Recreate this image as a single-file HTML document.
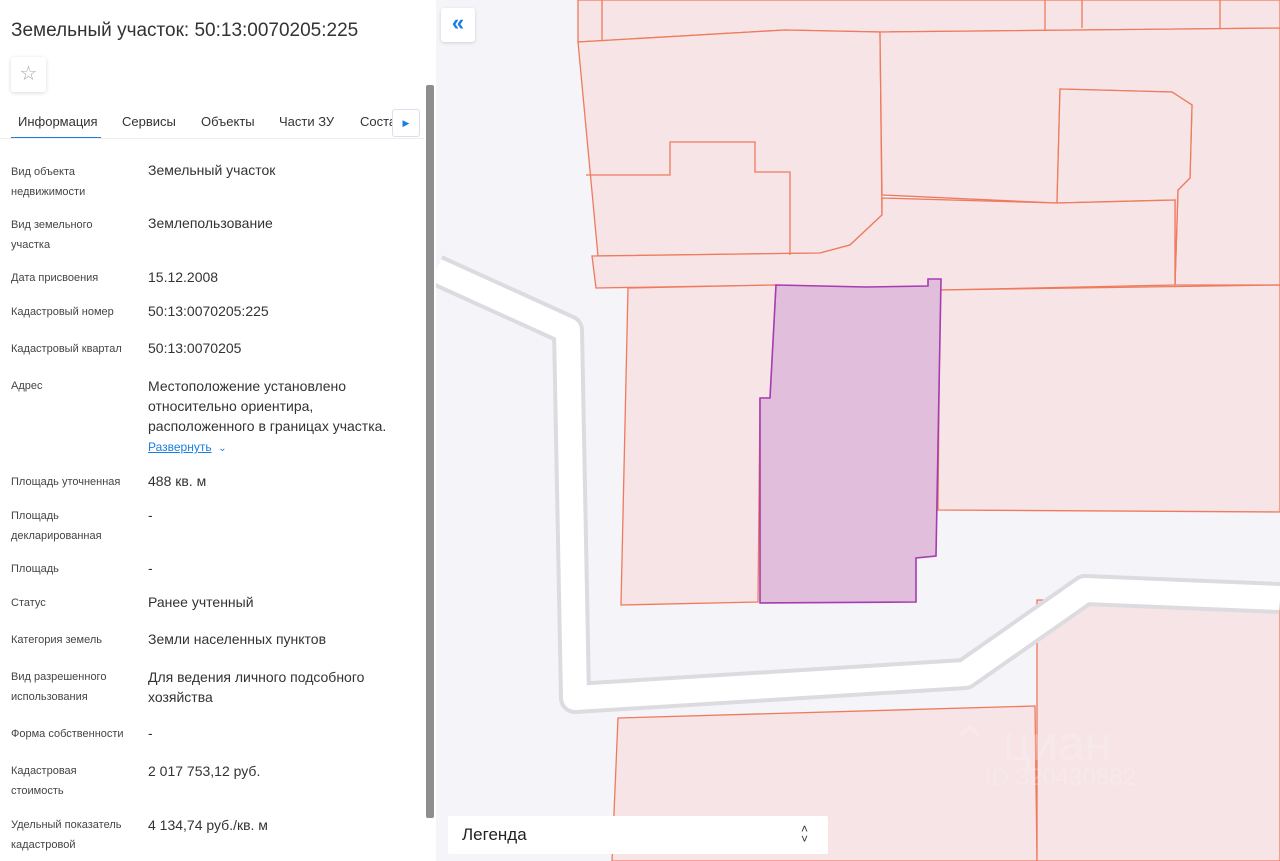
<!DOCTYPE html>
<html><head><meta charset="utf-8"><style>
*{margin:0;padding:0;box-sizing:border-box}
body{width:1280px;height:861px;overflow:hidden;background:#f4f4f9;font-family:"Liberation Sans","DejaVu Sans",sans-serif;position:relative}
#map{position:absolute;left:0;top:0}
#panel{position:absolute;left:0;top:0;width:436px;height:861px;background:#fff}
h1{position:absolute;left:11px;top:20px;font-size:19px;font-weight:normal;color:#333}
.star{position:absolute;left:11px;top:57px;width:35px;height:35px;border-radius:3px;box-shadow:0 1px 4px rgba(0,0,0,.15);color:#aaa;font-size:20px;text-align:center;line-height:35px}
.tabs{position:absolute;left:0;top:113px;width:424px;height:26px;border-bottom:1px solid #eee;font-size:13px;color:#333;white-space:nowrap;overflow:hidden}
.tabs span{position:absolute;top:1px}
.ul{position:absolute;left:11px;top:24px;width:90px;height:2px;background:#1a7fe0}
.arr{position:absolute;left:392px;top:109px;width:28px;height:28px;background:#fff;border:1px solid #dde;border-radius:3px;color:#1a7fe0;font-size:9px;text-align:center;line-height:26px}
.row{position:absolute;left:11px;width:410px}
.l{position:absolute;left:0;top:0;width:115px;font-size:11px;line-height:20px;color:#444}
.v{position:absolute;left:137px;top:-6px;width:275px;font-size:14px;line-height:20px;color:#333}
.sb{position:absolute;left:426px;top:85px;width:8px;height:733px;background:#8e8e8e;border-radius:2px}
.btn{position:absolute;left:441px;top:8px;width:34px;height:34px;background:#fff;border-radius:3px;box-shadow:0 1px 3px rgba(0,0,0,.15);color:#1a7fe0;font-size:22px;text-align:center;line-height:30px;font-weight:bold}
.leg{position:absolute;left:448px;top:816px;width:380px;height:38px;background:#fff;border-radius:2px;font-size:17px;color:#222;padding:9px 0 0 14px}
.leg b{position:absolute;right:20px;top:8px;font-weight:normal;font-size:12px;line-height:10px;color:#333}
</style></head><body>
<svg id="map" width="1280" height="861" viewBox="0 0 1280 861">
<rect x="436" y="0" width="844" height="861" fill="#f4f4f9"/>
<g fill="#f6e4e6" stroke="#ef7a5c" stroke-width="1.3">
<polygon points="578,0 1280,0 1280,28 880,32 785,30 578,42"/>
<polygon points="578,42 785,30 880,32 882,215 850,245 820,253 598,256"/>
<polygon points="880,32 1280,28 1280,285 1175,285 1178,190 1190,178 1192,105 1172,92 1060,89 1057,203 882,195"/>
<polygon points="1060,89 1172,92 1192,105 1190,178 1178,190 1175,285 1175,200 1057,203"/>
<polygon points="592,256 820,253 850,245 882,215 882,198 1057,203 1175,200 1175,285 940,290 776,285 596,288"/>
<polygon points="628,288 776,285 770,398 760,398 758,602 621,605"/>
<polygon points="940,290 1280,285 1280,512 938,510"/>
<polygon points="618,718 1035,706 1037,861 612,861"/>
<polygon points="1037,600 1280,603 1280,861 1037,861"/>
</g>
<g fill="none" stroke="#ef7a5c" stroke-width="1.3">
<path d="M602,0V40 M1045,0V30 M1082,0V28 M1220,0V28"/>
<path d="M586,175H670V142H755V172H790V255"/>
</g>
<path d="M436,270 L568,330 L575,698 L965,674 L1085,590 L1280,598" fill="none" stroke="#dcdce0" stroke-width="32" stroke-linejoin="round"/>
<path d="M436,270 L568,330 L575,698 L965,674 L1085,590 L1280,598" fill="none" stroke="#fff" stroke-width="24" stroke-linejoin="round"/>
<polygon points="776,285 866,287 928,286 928,279 941,279 936,556 916,558 916,602 760,603 760,398 770,398" fill="#e2bedd" stroke="#a43db0" stroke-width="1.6"/>
<text x="950" y="760" font-size="48" fill="#fff" opacity=".2" font-family="Liberation Sans,sans-serif">⌃ циан</text>
<text x="985" y="785" font-size="24" fill="#fff" opacity=".2" font-family="Liberation Sans,sans-serif">ID 320430882</text>
</svg>
<div id="panel">
<h1>Земельный участок: 50:13:0070205:225</h1>
<div class="star">☆</div>
<div class="tabs"><span style="left:18px">Информация</span><span style="left:122px">Сервисы</span><span style="left:201px">Объекты</span><span style="left:279px">Части ЗУ</span><span style="left:360px">Соста</span><div class="ul"></div></div>
<div class="arr">▶</div>
<div class="row" style="top:162px"><div class="l">Вид объекта недвижимости</div><div class="v" style="top:-2px">Земельный участок</div></div>
<div class="row" style="top:215px"><div class="l">Вид земельного участка</div><div class="v" style="top:-2px">Землепользование</div></div>
<div class="row" style="top:268px"><div class="l">Дата присвоения</div><div class="v" style="top:-1px">15.12.2008</div></div>
<div class="row" style="top:302px"><div class="l">Кадастровый номер</div><div class="v" style="top:-1px">50:13:0070205:225</div></div>
<div class="row" style="top:339px"><div class="l">Кадастровый квартал</div><div class="v" style="top:-1px">50:13:0070205</div></div>
<div class="row" style="top:376px"><div class="l">Адрес</div><div class="v" style="top:0">Местоположение установлено относительно ориентира, расположенного в границах участка.<br><span style="color:#1a7fe0;font-size:12px;text-decoration:underline">Развернуть</span> <span style="color:#1a7fe0;font-size:10px">&nbsp;⌄</span></div></div>
<div class="row" style="top:472px"><div class="l" style="width:130px">Площадь уточненная</div><div class="v" style="top:-1px">488 кв. м</div></div>
<div class="row" style="top:506px"><div class="l">Площадь декларированная</div><div class="v" style="top:-1px">-</div></div>
<div class="row" style="top:559px"><div class="l">Площадь</div><div class="v" style="top:-1px">-</div></div>
<div class="row" style="top:593px"><div class="l">Статус</div><div class="v" style="top:-1px">Ранее учтенный</div></div>
<div class="row" style="top:630px"><div class="l">Категория земель</div><div class="v" style="top:-1px">Земли населенных пунктов</div></div>
<div class="row" style="top:667px"><div class="l">Вид разрешенного использования</div><div class="v" style="top:0">Для ведения личного подсобного хозяйства</div></div>
<div class="row" style="top:724px"><div class="l" style="width:130px">Форма собственности</div><div class="v" style="top:-1px">-</div></div>
<div class="row" style="top:761px"><div class="l" style="width:90px">Кадастровая стоимость</div><div class="v" style="top:0">2 017 753,12 руб.</div></div>
<div class="row" style="top:815px"><div class="l">Удельный показатель кадастровой</div><div class="v" style="top:0">4 134,74 руб./кв. м</div></div>
<div class="sb"></div>
</div>
<div class="btn">«</div>
<div class="leg">Легенда<b>˄<br>˅</b></div>
</body></html>
